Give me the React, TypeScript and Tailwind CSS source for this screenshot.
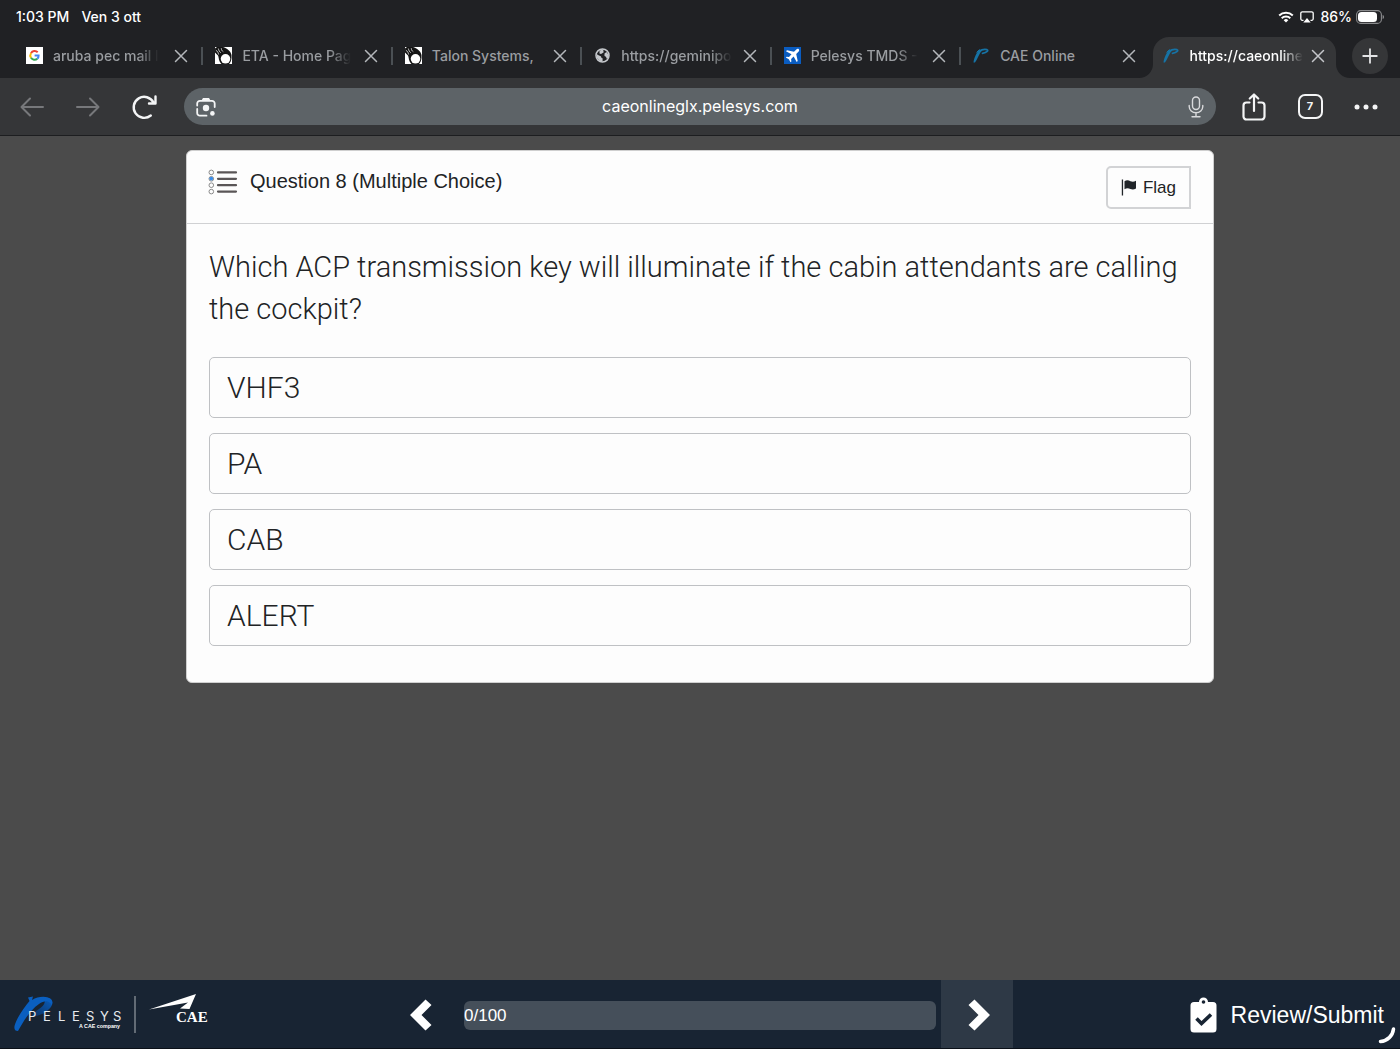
import React, { useState } from "react";

const UI_FONT = "font-['Inter','Liberation_Sans',sans-serif]";

function GoogleIcon() {
  return (
    <svg viewBox="0 0 17 17" className="size-[17px] shrink-0" aria-hidden="true">
      <rect width="17" height="17" fill="#fff" />
      <g fill="none" strokeWidth="2">
        <path d="M11.700 5.300A4.200 4.200 0 0 0 5 6.200" stroke="#ea4335" />
        <path d="M5 6.200a4.200 4.200 0 0 0 0 4.600" stroke="#fbbc05" />
        <path d="M5 10.800a4.200 4.200 0 0 0 6.300 1" stroke="#34a853" />
        <path d="M11.300 11.800a4 4 0 0 0 1.300-3.200H8.600" stroke="#4285f4" />
      </g>
    </svg>
  );
}

function TalonIcon() {
  return (
    <svg viewBox="0 0 17 17" className="size-[17px] shrink-0" aria-hidden="true">
      <rect width="17" height="17" fill="#fff" />
      <path d="M0 1.500L2 0h6c4 1.500 7.500 3.500 8.500 8v3c-.3 2.500-1 4.500-2.500 6H6.500C3.500 14 4 10.500 3 8.500L0 5.500z" fill="#141414" />
      <circle cx="10.500" cy="11.800" r="4.800" fill="#fff" />
      <path d="M.8 3.200C2.500 4.200 3.300 5.500 3.600 7.500M3.300 1.500C3.800 3.500 4.500 4.800 5.800 5.800M6.300 1.200C6.300 2.800 7 4 8.300 4.700" fill="none" stroke="#e8e8e8" strokeWidth=".8" />
    </svg>
  );
}

function GlobeIcon() {
  return (
    <svg viewBox="0 0 17 17" className="size-[17px] shrink-0" aria-hidden="true">
      <circle cx="8.500" cy="8.500" r="6.500" fill="none" stroke="#c4c7cb" strokeWidth="1.500" />
      <path d="M2.500 7l2.500 1.500 1.800.8.8 1.700 1 .3v3.200L5.500 13.700 3 11zM7.500 2.500l2.500 0L9 4l1 1-1.700 1.200L7 7 5.500 6.500 5.500 4zM10.500 6.500l2-1.500 2.300 3-.8 3.200-1.300.5-.7-2L10.500 9z" fill="#c4c7cb" />
    </svg>
  );
}

function PlaneIcon() {
  return (
    <svg viewBox="0 0 17 17" className="size-[17px] shrink-0" aria-hidden="true">
      <rect width="17" height="17" fill="#0a5cc0" />
      <path d="M14.800 2.200c-.9-.7-2-.2-2.700.5L10 4.800 3 3.200 2 4.300l5.500 3L5 10l-2.300-.3-.9.900 3 1.700 1.700 3 .9-.9L7.100 12l2.500-2.500 3.100 5.500 1-1-1.500-7 2.200-2.200c.7-.7 1.200-1.800.4-2.600z" fill="#fff" />
    </svg>
  );
}

function PelesysMark() {
  return (
    <svg viewBox="0 0 17 17" className="size-[17px] shrink-0" aria-hidden="true">
      <path d="M.500 15.500C1 11 3.500 5.500 6.500 2.500L9 3C6 7 4.500 12 2 15.500z" fill="#1673a5" />
      <path d="M6.500 4.500c2-1.800 5-2.300 7.500-1.800 1.800.5.2 2.900-4.500 3.700" fill="none" stroke="#1673a5" strokeWidth="1.700" strokeLinecap="round" />
      <path d="M3.500 5.500L6.500 2.500" stroke="#1673a5" strokeWidth="1" />
    </svg>
  );
}

function CloseIcon() {
  return (
    <svg viewBox="0 0 14 14" className="size-3.5" fill="none" stroke="currentColor" strokeWidth="1.500" strokeLinecap="round" aria-hidden="true">
      <path d="M1.500 1.500l11 11M12.500 1.500l-11 11" />
    </svg>
  );
}

const tabs = [
  { title: "aruba pec mail l", icon: <GoogleIcon /> },
  { title: "ETA - Home Pag", icon: <TalonIcon /> },
  { title: "Talon Systems,", icon: <TalonIcon /> },
  { title: "https://geminipo", icon: <GlobeIcon /> },
  { title: "Pelesys TMDS -", icon: <PlaneIcon /> },
  { title: "CAE Online", icon: <PelesysMark /> },
  { title: "https://caeonline", icon: <PelesysMark />, active: true },
];

function StatusBar() {
  return (
    <div className="flex h-[37px] items-center justify-between px-4 pb-1 text-sm font-medium text-white">
      <div className="flex gap-3">
        <span>1:03 PM</span>
        <span>Ven 3 ott</span>
      </div>
      <div className="flex items-center gap-1.5">
        <svg viewBox="0 0 16 12" className="h-3 w-4" aria-hidden="true">
          <path d="M1.200 4.500a9.800 9.800 0 0 1 13.600 0M3.700 7.200a6.200 6.200 0 0 1 8.600 0" fill="none" stroke="#fff" strokeWidth="2" />
          <path d="M8 11.500L5.700 9.200a3.300 3.300 0 0 1 4.600 0z" fill="#fff" />
        </svg>
        <svg viewBox="0 0 14 12" className="h-3 w-3.5" aria-hidden="true">
          <path d="M3.500 9.300H2.300A1.500 1.500 0 0 1 .8 7.800V2.300A1.500 1.500 0 0 1 2.300.8h9.400a1.500 1.500 0 0 1 1.500 1.500v5.500a1.500 1.500 0 0 1-1.500 1.500h-1.200" fill="none" stroke="#fff" strokeWidth="1.300" />
          <path d="M7 7l3.700 4.500H3.300z" fill="#fff" />
        </svg>
        <span>86%</span>
        <svg viewBox="0 0 28 14" className="-ml-0.5 h-3.5 w-7" aria-hidden="true">
          <rect x=".6" y=".6" width="24.800" height="12.800" rx="4" fill="none" stroke="#8a8b8d" strokeWidth="1.100" />
          <rect x="2" y="2" width="19" height="10" rx="3.500" fill="#fff" />
          <path d="M26.600 5v4c1-.4 1.400-1 1.400-2s-.4-1.600-1.400-2z" fill="#8a8b8d" />
        </svg>
      </div>
    </div>
  );
}

function TabStrip() {
  return (
    <div className="flex h-[41px] items-center pr-3 pl-3.5">
      <div className="grid h-full min-w-0 flex-1 grid-cols-7" role="tablist">
        {tabs.map((tab, i) => (
          <div key={tab.title} className={tab.active ? "relative flex min-w-0 pr-1 pl-0.5" : "flex min-w-0"}>
            {tab.active && (
              <>
                <svg viewBox="0 0 14 14" className="absolute bottom-0 -left-3 size-3.5" aria-hidden="true">
                  <path d="M0 14A14 14 0 0 0 14 0V14z" fill="#353638" />
                </svg>
                <svg viewBox="0 0 14 14" className="absolute -right-2.5 bottom-0 size-3.5" aria-hidden="true">
                  <path d="M14 14A14 14 0 0 1 0 0V14z" fill="#353638" />
                </svg>
              </>
            )}
            <div
              className={
                tab.active
                  ? "flex min-w-0 flex-1 items-center rounded-t-2xl bg-[#353638] pr-[11px] pb-1 pl-2.5 text-white"
                  : "flex min-w-0 flex-1 items-center pb-1 pl-3 text-[#9a9da1]"
              }
            >
              <button type="button" role="tab" aria-selected={!!tab.active} className="flex min-w-0 flex-1 items-center gap-2.5">
                {tab.icon}
                <span
                  className={
                    tab.title === "CAE Online" || tab.title === "Talon Systems,"
                      ? "text-left text-sm font-medium whitespace-nowrap"
                      : "text-left text-sm font-medium whitespace-nowrap [mask-image:linear-gradient(to_right,#000_80%,transparent)]"
                  }
                >
                  {tab.title}
                </span>
              </button>
              <button
                type="button"
                aria-label={"Close " + tab.title}
                className={tab.active ? "text-[#c4c6ca]" : "mr-[13px] text-[#b4b7bb]"}
              >
                <CloseIcon />
              </button>
              {i < 5 && <span className="h-[18px] w-0.5 bg-[#4b5054]" />}
              {i === 5 && <span className="w-0.5" />}
            </div>
          </div>
        ))}
      </div>
      <button type="button" aria-label="New tab" className="mb-1 ml-3 flex size-9 items-center justify-center rounded-full bg-[#353638] text-[#e3e4e6]">
        <svg viewBox="0 0 16 16" className="size-4" fill="none" stroke="currentColor" strokeWidth="1.800" strokeLinecap="round" aria-hidden="true">
          <path d="M8 1.200v13.600M1.200 8h13.600" />
        </svg>
      </button>
    </div>
  );
}

function ToolButton({ label, children, className = "text-[#f4f5f6]" }: { label: string; children: React.ReactNode; className?: string }) {
  return (
    <button type="button" aria-label={label} className={"flex h-9 w-14 items-center justify-center " + className}>
      {children}
    </button>
  );
}

function Toolbar() {
  return (
    <div className="flex h-[58px] items-center border-b border-[#1d1e20] bg-[#353638] pr-1.5 pl-1">
      <ToolButton label="Back" className="text-[#77787b]">
        <svg viewBox="0 0 24 20" className="h-5 w-6" fill="none" stroke="currentColor" strokeWidth="2" strokeLinecap="round" strokeLinejoin="round" aria-hidden="true">
          <path d="M10 1.500L1.500 10l8.500 8.500M2 10h21" />
        </svg>
      </ToolButton>
      <ToolButton label="Forward" className="text-[#77787b]">
        <svg viewBox="0 0 24 20" className="h-5 w-6" fill="none" stroke="currentColor" strokeWidth="2" strokeLinecap="round" strokeLinejoin="round" aria-hidden="true">
          <path d="M14 1.500l8.500 8.500-8.500 8.500M22 10H1" />
        </svg>
      </ToolButton>
      <ToolButton label="Reload">
        <svg viewBox="0 0 26 26" className="size-[26px]" fill="none" stroke="currentColor" strokeWidth="2.400" strokeLinecap="round" strokeLinejoin="round" aria-hidden="true">
          <path d="M19.800 21.500A10.500 10.500 0 1 1 22.500 8.500M24.500 2.500V9.500H18" />
        </svg>
      </ToolButton>
      <div className="mr-2.5 ml-3 flex h-[37px] min-w-0 flex-1 items-center rounded-full bg-[#5d6367] px-3 text-white">
        <button type="button" aria-label="Search with camera">
          <svg viewBox="0 0 20 20" className="size-5" aria-hidden="true">
            <path d="M1.200 8.500V6.500a2.700 2.700 0 0 1 2.700-2.700H16a2.700 2.700 0 0 1 2.700 2.700V10M1.200 12v4a2.700 2.700 0 0 0 2.700 2.700H10.500" fill="none" stroke="#f4f5f6" strokeWidth="1.800" strokeLinecap="round" />
            <path d="M5.500 3.500L7 1h6l1.500 2.500z" fill="#f4f5f6" />
            <circle cx="10" cy="11" r="3.200" fill="#f4f5f6" />
            <circle cx="16.400" cy="16.400" r="2.300" fill="#f4f5f6" />
          </svg>
        </button>
        <input aria-label="Address" defaultValue="caeonlineglx.pelesys.com" className="min-w-0 flex-1 bg-transparent pr-1 pb-0.5 text-center text-base outline-none" />
        <button type="button" aria-label="Voice search">
          <svg viewBox="0 0 16 22" className="h-[22px] w-4" fill="none" stroke="#d9dadc" strokeWidth="1.400" strokeLinecap="round" aria-hidden="true">
            <rect x="4.500" y="1" width="7" height="12.500" rx="3.500" />
            <path d="M1.200 9.500v1a6.800 6.300 0 0 0 13.600 0v-1M8 17v3.500M4 20.700h8" />
          </svg>
        </button>
      </div>
      <ToolButton label="Share">
        <svg viewBox="0 0 24 28" className="h-7 w-6" fill="none" stroke="currentColor" strokeWidth="2.200" strokeLinecap="round" strokeLinejoin="round" aria-hidden="true">
          <path d="M7.500 9.500H4.500A3 3 0 0 0 1.500 12.500v11a3 3 0 0 0 3 3h15a3 3 0 0 0 3-3v-11a3 3 0 0 0-3-3h-3M12 18V1.800M7.800 5.500L12 1.500l4.200 4" />
        </svg>
      </ToolButton>
      <ToolButton label="Show 7 tabs">
        <span className="flex size-[25px] items-center justify-center rounded-[7px] border-2 border-[#f4f5f6] text-[11px] font-bold">7</span>
      </ToolButton>
      <ToolButton label="More">
        <svg viewBox="0 0 24 6" className="h-1.5 w-6" fill="currentColor" aria-hidden="true">
          <circle cx="3" cy="3" r="2.500" />
          <circle cx="12" cy="3" r="2.500" />
          <circle cx="21" cy="3" r="2.500" />
        </svg>
      </ToolButton>
    </div>
  );
}

const answers = ["VHF3", "PA", "CAB", "ALERT"];

function QuestionCard() {
  const [picked, setPicked] = useState("");
  return (
    <section className="mx-auto w-full max-w-[1028px] rounded-md border border-[#cfcfcf] bg-[#fdfdfd] text-[#212325]">
      <header className="flex items-start justify-between border-b border-[#d0d1d3] pt-[15px] pr-[22px] pb-3.5 pl-[21px]">
        <div className="flex items-start gap-3">
          <svg viewBox="0 0 30 26" className="mt-[3px] h-[26px] w-[30px]" aria-hidden="true">
            <g fill="none" stroke="#8a8a8a" strokeWidth="1">
              <circle cx="3.300" cy="3.400" r="2.300" />
              <circle cx="3.300" cy="9.800" r="2.300" />
              <circle cx="3.300" cy="16.200" r="2.300" />
              <circle cx="3.300" cy="22.600" r="2.300" />
            </g>
            <circle cx="3.300" cy="9.600" r="1.900" fill="#3b8eea" />
            <path d="M10 3.400h18M10 9.800h18M10 16.200h18M10 22.600h18" stroke="#5a5657" strokeWidth="2.200" strokeLinecap="round" />
          </svg>
          <h1 className="text-xl leading-[30px]">Question 8 (Multiple Choice)</h1>
        </div>
        <button type="button" className="flex h-[43px] items-center gap-1.5 rounded-l-[5px] border-2 border-[#d2d3d5] px-[13px] text-[17px]">
          <svg viewBox="0 0 16 17" className="h-[17px] w-4" fill="#212529" aria-hidden="true">
            <path d="M.8.500h1.300v16H.8zM3.500 2.200c2-1.200 4-1 6 0 2 .8 3.500.5 5.500-.4v7.700c-2 1-3.600 1.200-5.600.4-2-.9-3.900-1-5.900.3z" />
          </svg>
          Flag
        </button>
      </header>
      <fieldset className="px-[22px] pt-[22px] pb-9">
        <legend className="float-left mb-[27px] w-full font-['Roboto','Liberation_Sans',sans-serif] text-[29px] leading-[42px] font-light">
          Which ACP transmission key will illuminate if the cabin attendants are calling the cockpit?
        </legend>
        <div className="clear-both flex flex-col gap-[15px]">
          {answers.map((answer) => (
            <label
              key={answer}
              className="relative flex h-[61px] cursor-pointer items-center rounded-[5px] border border-[#bfc1c4] px-[17px] font-['Roboto','Liberation_Sans',sans-serif] text-[30px] font-light has-checked:border-[#2f6fb0]"
            >
              <input type="radio" name="answer" value={answer} checked={picked === answer} onChange={() => setPicked(answer)} className="sr-only" />
              {answer}
            </label>
          ))}
        </div>
      </fieldset>
    </section>
  );
}

function Logos() {
  return (
    <svg viewBox="0 0 200 46" className="h-[46px] w-[200px]" role="img" aria-label="Pelesys, a CAE company">
      <defs>
        <linearGradient id="bowl" x1="0" y1="1" x2="1" y2="0">
          <stop offset="0" stopColor="#0c2f5c" />
          <stop offset="1" stopColor="#0a5fc0" />
        </linearGradient>
      </defs>
      <path d="M17 25C29 24 39 16 38.500 10 38 6 34 5 30 6 32 10 30 14 25 17 22 19 19 21 17 25z" fill="url(#bowl)" />
      <path d="M14 5.500l5-1-1 3.500C23 5 29 4 34 5.500 38 7 39 10 37.500 13 35.500 8 30 8.500 25 12 16 18 9 30 4 39 1 39 0 37 .500 34 3 25 10 16 15.500 9z" fill="#0a5fc0" />
      <g fill="#e8ebee" fontFamily="Inter, sans-serif" fontSize="13">
        <text x="14" y="29">P</text>
        <text x="29" y="29">E</text>
        <text x="44" y="29">L</text>
        <text x="58" y="29">E</text>
        <text x="72" y="29">S</text>
        <text x="86" y="29">Y</text>
        <text x="99" y="29">S</text>
      </g>
      <text x="65" y="36" fill="#fff" fontFamily="'Liberation Sans', sans-serif" fontWeight="700" fontSize="5.300">A CAE company</text>
      <path d="M121 4v37" stroke="#7b838c" strokeWidth="1.500" />
      <path d="M135 17.500L182 2l-6.500 15-9.500-.500 8-6z" fill="#fff" />
      <text x="162" y="30" fill="#fff" fontFamily="'Liberation Serif', serif" fontWeight="700" fontSize="15">CAE</text>
    </svg>
  );
}

function BottomBar() {
  return (
    <footer className="grid h-[69px] grid-cols-[1fr_626px_1fr] border-b border-[#0a1018] bg-[#182433] text-white">
      <div className="flex items-center pt-0.5 pl-3.5">
        <Logos />
      </div>
      <div className="flex items-center">
        <button type="button" aria-label="Previous question" className="flex h-full w-[72px] items-center justify-center pt-0.5 pr-1">
          <svg viewBox="0 0 22 32" className="h-8 w-[22px]" fill="#fff" aria-hidden="true">
            <path d="M15.500.500L21.500 6 11.500 16l10 10-6 5.500L0 16z" />
          </svg>
        </button>
        <div role="progressbar" aria-label="Progress" aria-valuemin={0} aria-valuemax={100} aria-valuenow={0} className="mx-[5px] mt-0.5 h-[29px] flex-1 rounded-md bg-[#454f5a] text-[17px] leading-[29px]">
          0/100
        </div>
        <button type="button" aria-label="Next question" className="flex h-full w-[72px] items-center justify-center bg-[#2e3946] pt-0.5 pl-1">
          <svg viewBox="0 0 22 32" className="h-8 w-[22px]" fill="#fff" aria-hidden="true">
            <path d="M6.500.500L.500 6l10 10-10 10 6 5.500L22 16z" />
          </svg>
        </button>
      </div>
      <div className="relative flex items-center justify-end pt-0.5 pr-4">
        <button type="button" className="flex items-center gap-3.5 text-[23px]">
          <svg viewBox="0 0 27 36" className="h-9 w-[27px]" aria-hidden="true">
            <path d="M4 5h5a4.500 4.500 0 0 1 9 0h5a3.500 3.500 0 0 1 3.500 3.500V32a3.500 3.500 0 0 1-3.500 3.500H4A3.500 3.500 0 0 1 .500 32V8.500A3.500 3.500 0 0 1 4 5z" fill="#fff" />
            <circle cx="13.500" cy="5" r="1.800" fill="#182433" />
            <path d="M6.500 21.500l5 5 9.500-9" fill="none" stroke="#182433" strokeWidth="3.600" />
          </svg>
          Review/Submit
        </button>
        <svg viewBox="0 0 18 18" className="absolute right-1 bottom-1 size-[18px]" fill="none" stroke="#fff" strokeWidth="3.500" strokeLinecap="round" aria-hidden="true">
          <path d="M2.500 15.500A14 14 0 0 0 15.500 3" />
        </svg>
      </div>
    </footer>
  );
}

export default function App() {
  return (
    <div className="flex min-h-screen flex-col bg-[#4b4b4b] font-['Liberation_Sans',Arial,sans-serif]">
      <div className={"bg-[#202124] " + UI_FONT}>
        <StatusBar />
        <TabStrip />
        <Toolbar />
      </div>
      <main className="flex-1 px-4 pt-3.5 pb-6">
        <QuestionCard />
      </main>
      <BottomBar />
    </div>
  );
}
